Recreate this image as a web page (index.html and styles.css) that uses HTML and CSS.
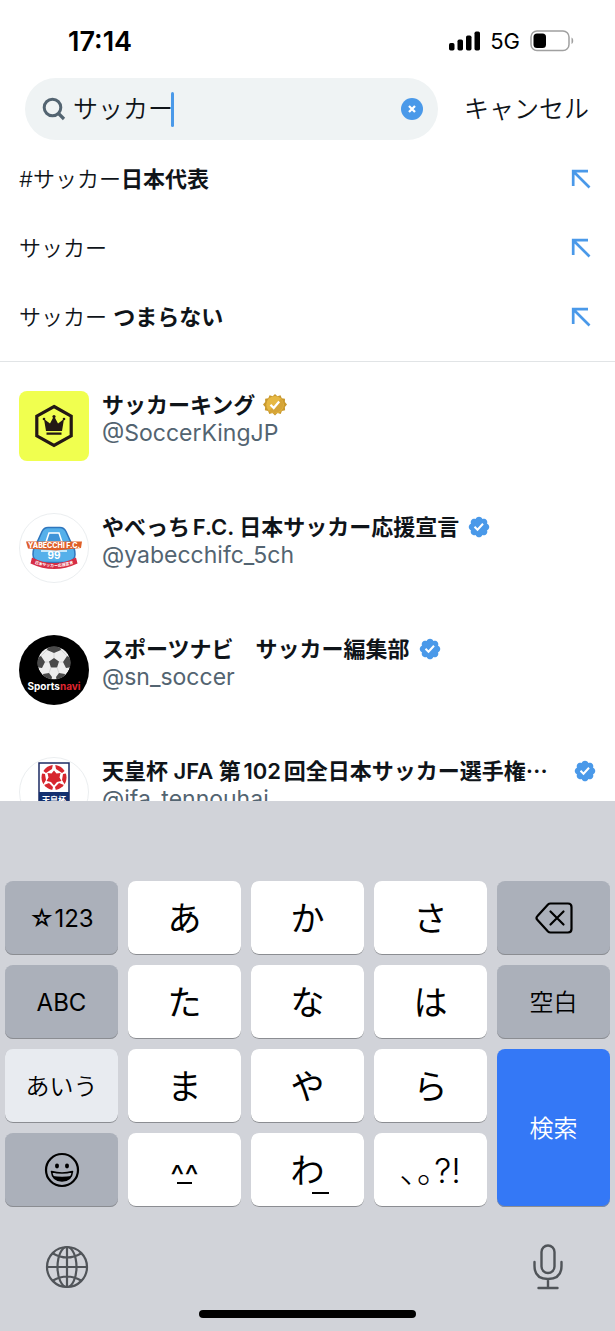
FILE: index.html
```
<!DOCTYPE html>
<html lang="ja">
<head>
    <meta charset="UTF-8">
    <meta name="viewport" content="width=device-width, initial-scale=1.0">
    <title>サッカー - 検索</title>
    <link rel="stylesheet" href="styles.css">
</head>
<body>
    <!-- Shared icons -->
    <svg class="defs" aria-hidden="true">
        <symbol id="arrow" viewBox="0 0 20 20">
            <path d="M2.200 17V2.200H17M2.200 2.200L18.500 18.500" fill="none" stroke="#4a99e9" stroke-width="2.700"/>
        </symbol>
        <symbol id="verified" viewBox="0 0 22 22">
            <path fill="#4a99e9" d="M20.396 11c-.018-.646-.215-1.275-.57-1.816-.354-.54-.852-.972-1.438-1.246.223-.607.27-1.264.14-1.897-.131-.634-.437-1.218-.882-1.687-.47-.445-1.053-.75-1.687-.882-.633-.13-1.29-.083-1.897.14-.273-.587-.704-1.086-1.245-1.44S11.647 1.62 11 1.604c-.646.017-1.273.213-1.813.568s-.969.854-1.24 1.44c-.608-.223-1.267-.272-1.902-.14-.635.13-1.22.436-1.69.882-.445.47-.749 1.055-.878 1.688-.13.633-.08 1.29.144 1.896-.587.274-1.087.705-1.443 1.245-.356.54-.555 1.17-.574 1.817.02.647.218 1.276.574 1.817.356.54.856.972 1.443 1.245-.224.606-.274 1.263-.144 1.896.13.634.433 1.218.877 1.688.47.443 1.054.747 1.687.878.633.132 1.29.084 1.897-.136.274.586.705 1.084 1.246 1.439.54.354 1.17.551 1.816.569.647-.016 1.276-.213 1.817-.567s.972-.854 1.245-1.44c.604.239 1.266.296 1.903.164.636-.132 1.22-.447 1.68-.907.46-.46.776-1.044.908-1.681s.075-1.299-.165-1.903c.586-.274 1.084-.705 1.439-1.246.354-.54.551-1.17.569-1.816zM9.662 14.85l-3.429-3.428 1.293-1.302 2.072 2.072 4.4-4.794 1.347 1.246z"/>
        </symbol>
    </svg>

    <div class="status">
        <span class="time">17:14</span>
        <div class="status-right">
            <svg width="31" height="20" viewBox="0 0 31 20">
                <rect x="0" y="12" width="5.5" height="7.5" rx="1.7"/>
                <rect x="8.5" y="8.5" width="5.5" height="11" rx="1.7"/>
                <rect x="17" y="4.5" width="5.5" height="15" rx="1.7"/>
                <rect x="25.5" y="0.5" width="5.5" height="19" rx="1.7"/>
            </svg>
            <span class="network">5G</span>
            <svg width="44" height="22" viewBox="0 0 44 22">
                <rect x="1" y="1" width="38" height="19.5" rx="6" fill="none" stroke="#a0a0a0" stroke-width="1.5"/>
                <path d="M41.5 7.5c2.3 1.2 2.3 5.3 0 6.5z" fill="#a0a0a0"/>
                <rect x="3.5" y="3.5" width="12.5" height="14.5" rx="3.5"/>
            </svg>
        </div>
    </div>

    <header class="header">
        <form class="search" onsubmit="return false">
            <svg width="24" height="24" viewBox="0 0 24 24">
                <circle cx="10.5" cy="10.5" r="8.3" fill="none" stroke="#536471" stroke-width="3"/>
                <path d="M16.5 16.5l5.5 5.5" stroke="#536471" stroke-width="3.2"/>
            </svg>
            <input id="query" type="text" value="サッカー" aria-label="検索">
            <span class="caret"></span>
            <button class="clear" type="button" aria-label="クリア" onclick="clearQuery()">
                <svg width="22" height="22" viewBox="0 0 22 22">
                    <circle cx="11" cy="11" r="11" fill="#4a99e9"/>
                    <path d="M8 8l6 6M14 8l-6 6" stroke="#fff" stroke-width="2.3"/>
                </svg>
            </button>
        </form>
        <button class="cancel" type="button">キャンセル</button>
    </header>

    <main class="results">
        <ul class="suggestions">
            <li>
                <a href="#">#サッカー<b>日本代表</b></a>
                <button type="button" aria-label="入力"><svg width="20" height="20"><use href="#arrow"/></svg></button>
            </li>
            <li>
                <a href="#">サッカー</a>
                <button type="button" aria-label="入力"><svg width="20" height="20"><use href="#arrow"/></svg></button>
            </li>
            <li>
                <a href="#">サッカー <b>つまらない</b></a>
                <button type="button" aria-label="入力"><svg width="20" height="20"><use href="#arrow"/></svg></button>
            </li>
        </ul>

        <div class="users">
            <a class="user" href="#">
                <svg class="avatar square" viewBox="0 0 70 70">
                    <rect width="70" height="70" fill="#f0ff4f"/>
                    <path d="M35 15.5l17.2 9.7v19.6L35 54.500l-17.2-9.700V25.200z" fill="none" stroke="#231815" stroke-width="3.200"/>
                    <path d="M27 40L25 28l6 4.500 4-7.500 4 7.500 6-4.500-2 12zM27.500 41.500h15v2.300h-15z" fill="#231815"/>
                    <circle cx="25" cy="28" r="1.300" fill="#231815"/>
                    <circle cx="35" cy="25.500" r="1.600" fill="#231815"/>
                    <circle cx="45" cy="28" r="1.300" fill="#231815"/>
                </svg>
                <div class="info">
                    <div class="name">
                        <span>サッカーキング</span>
                        <svg class="badge" viewBox="0 0 24 24">
                            <path d="M12 1l2.400 2.200 3.100-1 1.300 3 3.200.6-.1 3.300 2.200 2.400-2.200 2.500.2 3.200-3.200.7-1.200 3-3.200-.9L12 22.500 9.500 20l-3.200.9-1.200-3-3.200-.7.200-3.200L0 11.500l2.200-2.400L2.100 5.800l3.200-.6 1.300-3 3.100 1z" fill="#c9992e"/>
                            <circle cx="12" cy="11.700" r="8.800" fill="#e6b843"/>
                            <path d="M5.800 17.900L18.200 5.500a8.800 8.800 0 0 1-12.400 12.400z" fill="#d5a437"/>
                            <path d="M7.500 11.800l3.200 3.200 5.500-6.500" fill="none" stroke="#fff" stroke-width="2.300"/>
                        </svg>
                    </div>
                    <div class="handle">@SoccerKingJP</div>
                </div>
            </a>

            <a class="user" href="#">
                <svg class="avatar" viewBox="0 0 70 70">
                    <circle cx="35" cy="35" r="34.500" fill="#fff" stroke="#ebeef0"/>
                    <path d="M29 14.500h12q4 0 6 4l5 11q4 5 4 12 0 5-6 8H20q-6-3-6-8 0-7 4-12l5-11q2-4 6-4z" fill="#55b0ea" stroke="#2f76bd" stroke-width="1.500"/>
                    <path d="M30 20h10l3 9H27z" fill="#3f94d8" stroke="#fff" stroke-width="1.500"/>
                    <path d="M22 38h26" stroke="#c6e8fb" stroke-width="2"/>
                    <path d="M7 28.500h56l-1 6.500-25 2.500L9 35.500z" fill="#df5f28"/>
                    <text x="35" y="35" text-anchor="middle" class="logo-yabe">YABECCHI F.C.</text>
                    <text x="35" y="46" text-anchor="middle" class="logo-99">99</text>
                    <path d="M13 44.500q22 11 44 0l1.500 6q-23.500 11-47 0z" fill="#d62d45"/>
                    <path id="ribbon" d="M12 49q23 10 46 0" fill="none"/>
                    <text text-anchor="middle" class="logo-ribbon"><textPath href="#ribbon" startOffset="50%">日本サッカー応援宣言</textPath></text>
                </svg>
                <div class="info">
                    <div class="name">
                        <span>やべっちF.C. 日本サッカー応援宣言</span>
                        <svg class="badge"><use href="#verified"/></svg>
                    </div>
                    <div class="handle">@yabecchifc_5ch</div>
                </div>
            </a>

            <a class="user" href="#">
                <svg class="avatar" viewBox="0 0 70 70">
                    <circle cx="35" cy="35" r="35"/>
                    <clipPath id="ball"><circle cx="35" cy="28" r="16.500"/></clipPath>
                    <g clip-path="url(#ball)">
                        <circle cx="35" cy="28" r="16.500" fill="#eee"/>
                        <path d="M35 23l5 3.600-1.900 5.900h-6.200L30 26.600zM29 11h12l1 4-7 3-7-3zM17 23l5-2 4 6-3 6-6-1zM53 23l-5-2-4 6 3 6 6-1zM25 45l-1-6 6-1 3 4-1 5zM45 45l1-6-6-1-3 4 1 5z" fill="#4a4a4a"/>
                        <path d="M35 18v5M26 27l4 0M44 27h-4M32 32.500L30 38M38 32.500l2 5.500M28 15l-6 6M42 15l6 6" stroke="#ccc" stroke-width=".7"/>
                    </g>
                    <text x="35" y="55" text-anchor="middle" class="logo-sports">Sports<tspan fill="#e02630">navi</tspan></text>
                </svg>
                <div class="info">
                    <div class="name">
                        <span>スポーツナビ　サッカー編集部</span>
                        <svg class="badge"><use href="#verified"/></svg>
                    </div>
                    <div class="handle">@sn_soccer</div>
                </div>
            </a>

            <a class="user" href="#">
                <svg class="avatar" viewBox="0 0 70 70">
                    <circle cx="35" cy="35" r="34.500" fill="#fff" stroke="#ebeef0"/>
                    <path d="M20 6h30v52H20z" fill="#fff" stroke="#1d2b63" stroke-width="1.500"/>
                    <path d="M20 35h30v23H20z" fill="#14306f"/>
                    <clipPath id="cup"><circle cx="35" cy="20.500" r="12.500"/></clipPath>
                    <g clip-path="url(#cup)" fill="#d7262e">
                        <path d="M35 13.500l2.500 3 4-.5-1 4.500 2 3.500-4.500 1-3 3.500-3-3.500-4.500-1 2-3.500-1-4.500 4 .5z"/>
                        <path d="M26 7h8l-1 5-6 4-4-3zM36 7h8l3 6-4 3-6-4zM21 16l5 1 1 6-3 5-4-2zM49 16l-5 1-1 6 3 5 4-2zM25 28l5-2 4 4-1 4h-6zM45 28l-5-2-4 4 1 4h6z"/>
                    </g>
                    <text x="35" y="46" text-anchor="middle" class="logo-cup">天皇杯</text>
                </svg>
                <div class="info">
                    <div class="name wide">
                        <span>天皇杯 JFA 第102回全日本サッカー選手権<i>…</i></span>
                        <svg class="badge"><use href="#verified"/></svg>
                    </div>
                    <div class="handle">@jfa_tennouhai</div>
                </div>
            </a>
        </div>
    </main>

    <div class="keyboard">
        <div class="keys">
            <button class="gray">☆123</button>
            <button class="kana">あ</button>
            <button class="kana">か</button>
            <button class="kana">さ</button>
            <button class="gray icon" aria-label="削除">
                <svg width="38" height="32" viewBox="0 0 38 32" fill="none" stroke="#000" stroke-width="2.200" stroke-linecap="round" stroke-linejoin="round">
                    <path d="M15.500 1.500H33q3.500 0 3.500 3.500v22q0 3.500-3.500 3.500H15.500q-1.500 0-2.500-1L2.500 18q-2-2 0-4L13 2.500q1-1 2.500-1z"/>
                    <path d="M15.500 9.500l13 13M28.500 9.500l-13 13"/>
                </svg>
            </button>

            <button class="gray">ABC</button>
            <button class="kana">た</button>
            <button class="kana">な</button>
            <button class="kana">は</button>
            <button class="gray word">空白</button>

            <button class="light word">あいう</button>
            <button class="kana">ま</button>
            <button class="kana">や</button>
            <button class="kana">ら</button>
            <button class="enter word">検索</button>

            <button class="gray icon" aria-label="絵文字">
                <svg width="36" height="36" viewBox="0 0 36 36">
                    <circle cx="18" cy="18" r="16" fill="none" stroke="#000" stroke-width="2.200"/>
                    <ellipse cx="13" cy="14" rx="2" ry="2.400"/>
                    <ellipse cx="23" cy="14" rx="2" ry="2.400"/>
                    <path d="M7.500 19.500q10.500 3 21 0-1 9.500-10.500 9.500T7.500 19.500z" fill="none" stroke="#000" stroke-width="1.600" stroke-linejoin="round"/>
                    <path d="M8.500 24q9.500 1.500 19 0-3 5-9.500 5t-9.500-5z"/>
                </svg>
            </button>
            <button class="face" aria-label="顔文字"><span>^^</span></button>
            <button class="kana"><span class="wa">わ</span></button>
            <button class="kana marks">､｡?!</button>
        </div>

        <div class="tools">
            <button aria-label="キーボード切替">
                <svg width="44" height="44" viewBox="0 0 44 44" fill="none" stroke="#505459" stroke-width="2.200">
                    <circle cx="22" cy="22" r="20"/>
                    <ellipse cx="22" cy="22" rx="9.500" ry="20"/>
                    <path d="M22 2v40M2 22h40M8 8.500q14 8 28 0M8 35.500q14-8 28 0"/>
                </svg>
            </button>
            <button aria-label="音声入力">
                <svg width="32" height="46" viewBox="0 0 32 46" fill="none" stroke="#505459" stroke-width="2.400" stroke-linecap="round">
                    <rect x="9.500" y="1.500" width="13" height="27.500" rx="6.500"/>
                    <path d="M2.500 18v4q0 13 13.500 13t13.500-13v-4M16 35v8.500M6.500 44h19"/>
                </svg>
            </button>
        </div>
        <div class="home"></div>
    </div>

    <script>
        function clearQuery() {
            document.getElementById('query').value = '';
        }
    </script>
</body>
</html>
```

FILE: styles.css
```
* {
    box-sizing: border-box;
}

body {
    height: 100vh;
    margin: 0;
    display: flex;
    flex-direction: column;
    overflow: hidden;
    background-color: #fff;
    color: #0f1419;
    font-family: Inter, "Noto Sans CJK JP", sans-serif;
    font-size: 22px;
}

button {
    margin: 0;
    padding: 0;
    border: none;
    background: none;
    color: inherit;
    font: inherit;
    cursor: pointer;
}

a {
    color: inherit;
    text-decoration: none;
}

svg {
    display: block;
    flex-shrink: 0;
}

.defs {
    position: absolute;
    width: 0;
    height: 0;
}

/* Status bar */
.status {
    display: flex;
    justify-content: space-between;
    align-items: center;
    height: 78px;
    padding: 4px 41px 0 68px;
    color: #000;
}

.time {
    font-size: 27px;
    font-weight: 600;
}

.status-right {
    display: flex;
    align-items: center;
    gap: 10px;
}

/* Search row */
.header {
    display: flex;
    align-items: center;
    gap: 26px;
    padding: 0 26px 0 25px;
}

.search {
    flex: 1;
    min-width: 0;
    display: flex;
    align-items: center;
    height: 62px;
    padding: 0 15px 0 17px;
    border-radius: 32px;
    background-color: #eff3f4;
}

.search input {
    width: 100px;
    margin-left: 7px;
    padding: 0 0 4px;
    border: none;
    outline: none;
    background: none;
    color: inherit;
    font-family: inherit;
    font-size: 25px;
    font-weight: 350;
}

.caret {
    width: 3px;
    height: 35px;
    margin-left: -2px;
    border-radius: 2px;
    background-color: #4a99e9;
}

.clear {
    margin-left: auto;
}

.cancel {
    padding-bottom: 4px;
    font-size: 25px;
    font-weight: 350;
}

/* Results */
.results {
    flex: 1;
    min-height: 0;
    overflow: hidden;
}

.suggestions {
    margin: 0;
    padding: 4px 0 10px;
    border-bottom: 1px solid #e1e4e6;
    list-style: none;
}

.suggestions li {
    display: flex;
    justify-content: space-between;
    align-items: center;
    height: 69px;
    padding: 0 24px 0 19px;
    font-weight: 350;
}

.suggestions a {
    padding-bottom: 4px;
}

.suggestions b {
    font-weight: 700;
}

.users {
    padding-top: 29px;
}

.user {
    display: flex;
    gap: 13px;
    height: 122px;
    padding: 0 18px 0 19px;
}

.avatar {
    width: 70px;
    height: 70px;
}

.square {
    border-radius: 8px;
}

.info {
    flex: 1;
    min-width: 0;
}

.name {
    display: flex;
    align-items: center;
    gap: 8px;
    height: 28px;
    line-height: 28px;
    font-weight: 600;
    white-space: nowrap;
    text-autospace: normal;
}

.wide {
    justify-content: space-between;
}

.name i {
    font-family: "Noto Sans CJK JP", sans-serif;
    font-style: normal;
    line-height: 0;
}

.badge {
    width: 24px;
    height: 24px;
}

.handle {
    font-size: 23px;
    line-height: 29px;
    color: #536471;
}

/* Lettering inside the avatars */
.logo-yabe {
    font: 800 7px Inter, sans-serif;
    fill: #fff;
}

.logo-99 {
    font: bold 10px Inter, sans-serif;
    fill: #fff;
}

.logo-ribbon {
    font: bold 4px "Noto Sans CJK JP", sans-serif;
    fill: #fff;
}

.logo-sports {
    font: bold 10px Inter, sans-serif;
    fill: #fff;
}

.logo-cup {
    font: bold 8px "Noto Sans CJK JP", sans-serif;
    fill: #fff;
}

/* Keyboard */
.keyboard {
    padding: 80px 5px 13px;
    background-color: #d1d3d9;
    color: #000;
}

.keys {
    display: grid;
    grid-template-columns: repeat(5, 1fr);
    grid-auto-rows: 74px;
    gap: 10px;
}

.keys button {
    display: flex;
    justify-content: center;
    align-items: center;
    border-radius: 8px;
    background-color: #fff;
    box-shadow: inset 0 -1px 0 #8b8d92;
    font-size: 24px;
}

.keys .kana {
    padding-bottom: 4px;
    font-size: 34px;
}

.keys .word {
    padding-bottom: 4px;
    font-weight: 350;
}

.keys .gray {
    background-color: #abb0ba;
}

.keys .light {
    background-color: #e8ebf0;
}

.keys .enter {
    grid-row: span 2;
    background-color: #3478f6;
    color: #fff;
}

.keys .face {
    padding-top: 10px;
    font-size: 30px;
}

.keys .marks {
    font-weight: 300;
}

/* Short bars drawn under the ^^ and わ keys */
.face span,
.wa {
    position: relative;
}

.face span::after,
.wa::after {
    content: "";
    position: absolute;
    height: 2px;
    background-color: #000;
}

.face span::after {
    left: 25%;
    right: 25%;
    bottom: 9px;
}

.wa::after {
    width: 17px;
    right: -4px;
    bottom: -1px;
}

.tools {
    display: flex;
    justify-content: space-between;
    align-items: center;
    padding: 37px 46px 0 40px;
}

.home {
    width: 36%;
    height: 8px;
    margin: 20px auto 0;
    border-radius: 4px;
    background-color: #000;
}
```
